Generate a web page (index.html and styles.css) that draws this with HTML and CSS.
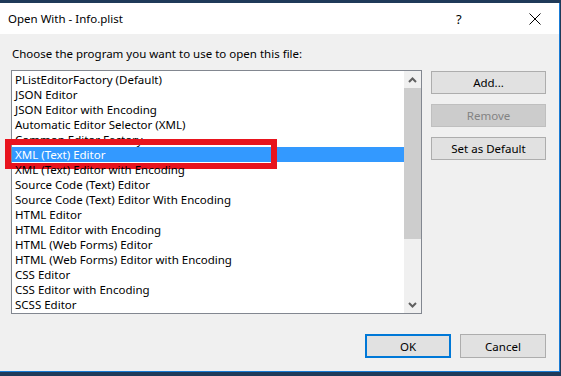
FILE: index.html
```html
<!DOCTYPE html>
<html lang="en">
<head>
    <meta charset="UTF-8">
    <meta name="viewport" content="width=device-width, initial-scale=1.0">
    <title>Open With - Info.plist</title>
    <link rel="stylesheet" href="styles.css">
</head>
<body>
    <div class="window">
        <div class="titlebar">
            <span class="title">Open With - Info.plist</span>
            <span class="help">?</span>
            <svg class="close" width="12" height="12" viewBox="0 0 12 12">
                <path d="M0.5 0.5 L11.5 11.5 M11.5 0.5 L0.5 11.5" stroke="#000" stroke-width="1" fill="none"/>
            </svg>
        </div>
        <div class="content">
            <div class="prompt">Choose the program you want to use to open this file:</div>
            <div class="main">
                <div class="listbox">
                    <div class="items">
                        <div class="item">PListEditorFactory (Default)</div>
                        <div class="item">JSON Editor</div>
                        <div class="item">JSON Editor with Encoding</div>
                        <div class="item">Automatic Editor Selector (XML)</div>
                        <div class="item">Common Editor Factory</div>
                        <div class="item selected">XML (Text) Editor<span class="callout"></span></div>
                        <div class="item">XML (Text) Editor with Encoding</div>
                        <div class="item">Source Code (Text) Editor</div>
                        <div class="item">Source Code (Text) Editor With Encoding</div>
                        <div class="item">HTML Editor</div>
                        <div class="item">HTML Editor with Encoding</div>
                        <div class="item">HTML (Web Forms) Editor</div>
                        <div class="item">HTML (Web Forms) Editor with Encoding</div>
                        <div class="item">CSS Editor</div>
                        <div class="item">CSS Editor with Encoding</div>
                        <div class="item">SCSS Editor</div>
                    </div>
                    <div class="scrollbar">
                        <div class="arrow">
                            <svg width="9" height="6" viewBox="0 0 9 6"><path d="M1 5 L4.5 1.5 L8 5" stroke="#606060" stroke-width="2" fill="none"/></svg>
                        </div>
                        <div class="thumb"></div>
                        <div class="track"></div>
                        <div class="arrow">
                            <svg width="9" height="6" viewBox="0 0 9 6"><path d="M1 1 L4.5 4.5 L8 1" stroke="#606060" stroke-width="2" fill="none"/></svg>
                        </div>
                    </div>
                </div>
                <div class="side">
                    <button class="btn">Add...</button>
                    <button class="btn disabled">Remove</button>
                    <button class="btn">Set as Default</button>
                </div>
            </div>
            <div class="footer">
                <button class="btn wide default">OK</button>
                <button class="btn wide">Cancel</button>
            </div>
        </div>
    </div>
</body>
</html>
```

FILE: styles.css
```css
body {
  margin: 0;
  padding-top: 3px;
  background-color: #1f3a59;
  font-family: "Noto Sans", sans-serif;
  font-size: 11.5px;
  color: #000;
  height: 376px;
  overflow: hidden;
}
.window {
  width: 559px;
  height: 368px;
  background-color: #f0f0f0;
  border-right: 1px solid #1a7cd6;
  border-bottom: 1px solid #1a7cd6;
}
.titlebar {
  height: 31px;
  background-color: #fff;
  display: flex;
  align-items: center;
  padding-left: 8px;
}
.title {
  flex: 1;
}
.help {
  width: 10px;
  margin-right: 63px;
  font-size: 13px;
}
.close {
  margin-right: 18px;
}
.content {
  padding: 12px 13px 0 11px;
}
.prompt {
  height: 16px;
  line-height: 16px;
  padding-left: 1px;
  margin-bottom: 8px;
}
.main {
  display: flex;
}
.listbox {
  width: 409px;
  height: 242px;
  border: 1px solid #828790;
  background-color: #fff;
  display: flex;
}
.items {
  flex: 1;
  padding-top: 1px;
}
.item {
  height: 15px;
  line-height: 15px;
  padding-left: 3px;
  white-space: nowrap;
  position: relative;
}
.item.selected {
  background-color: #3399ff;
  color: #fff;
}
.callout {
  position: absolute;
  left: -7px;
  top: -8px;
  width: 272px;
  height: 30px;
  border: 6px solid #e8141e;
  box-sizing: border-box;
}
.scrollbar {
  width: 17px;
  background-color: #f0f0f0;
  display: flex;
  flex-direction: column;
}
.arrow {
  height: 17px;
  display: flex;
  align-items: center;
  justify-content: center;
}
.thumb {
  height: 151px;
  background-color: #cdcdcd;
}
.track {
  flex: 1;
}
.side {
  margin-left: 9px;
  padding-top: 1px;
  display: flex;
  flex-direction: column;
  gap: 10px;
}
.btn {
  width: 115px;
  height: 23px;
  background-color: #e1e1e1;
  border: 1px solid #adadad;
  font-family: inherit;
  font-size: 11.5px;
  color: #000;
  padding: 0;
}
.btn.disabled {
  background-color: #cccccc;
  border-color: #bfbfbf;
  color: #838383;
}
.footer {
  display: flex;
  justify-content: flex-end;
  gap: 9px;
  margin-top: 20px;
}
.btn.wide {
  width: 86px;
  height: 24px;
}
.btn.default {
  border: 2px solid #0078d7;
}
```
